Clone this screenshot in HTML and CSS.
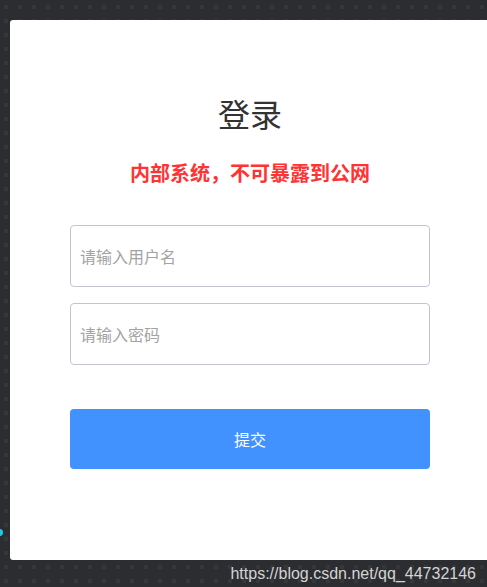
FILE: index.html
```html
<!DOCTYPE html>
<html lang="zh-CN">
<head>
    <meta charset="UTF-8">
    <meta name="viewport" content="width=device-width, initial-scale=1.0">
    <title>登录</title>
    <link rel="stylesheet" href="styles.css">
</head>
<body>
    <span class="edge_dot"></span>
    <div class="login_box">
        <h1 class="title">登录</h1>
        <p class="warning">内部系统，不可暴露到公网</p>
        <form class="login_form" onsubmit="return false">
            <input class="field" type="text" placeholder="请输入用户名">
            <input class="field" type="password" placeholder="请输入密码">
            <button class="submit_btn" type="submit">提交</button>
        </form>
    </div>
    <div class="watermark">https://blog.csdn.net/qq_44732146</div>
</body>
</html>
```

FILE: styles.css
```css
* {
    margin: 0;
    padding: 0;
    box-sizing: border-box;
}
body {
    font-family: "Noto Sans CJK SC", "Noto Sans", sans-serif;
    background-color: #36373b;
    background-image:
        linear-gradient(90deg, transparent 4px, #2c2d31 4px),
        linear-gradient(transparent 4px, #2c2d31 4px);
    background-size: 14px 14px;
    background-position: 4px 5px;
    height: 587px;
    overflow: hidden;
    padding: 20px 0 0 10px;
    position: relative;
}
/* cyan dot peeking in at the left edge */
.edge_dot {
    position: absolute;
    left: -4px;
    top: 529px;
    width: 7px;
    height: 7px;
    border-radius: 50%;
    background-color: #1fc8e6;
}
.login_box {
    width: 480px;
    height: 540px;
    background: #fff;
    border-radius: 3px;
    padding-top: 73px;
    display: flex;
    flex-direction: column;
    align-items: center;
}
.title {
    font-size: 32px;
    font-weight: 400;
    line-height: 40px;
    color: #333;
}
.warning {
    margin-top: 26px;
    font-size: 20px;
    font-weight: 700;
    line-height: 28px;
    color: #ff3333;
}
.login_form {
    margin-top: 38px;
    width: 360px;
    display: flex;
    flex-direction: column;
}
.field {
    height: 62px;
    border: 1px solid #c6c3d0;
    border-radius: 4px;
    padding: 0 9px;
    font-family: inherit;
    font-size: 16px;
    color: #333;
    outline: none;
}
.field + .field {
    margin-top: 16px;
}
.field::placeholder {
    color: #a3a3a3;
}
.submit_btn {
    margin-top: 44px;
    height: 60px;
    border: none;
    border-radius: 4px;
    background-color: #4191ff;
    color: #fff;
    font-family: inherit;
    font-size: 16px;
    cursor: pointer;
}
.watermark {
    text-align: right;
    padding-right: 11px;
    font-family: "Liberation Sans", Arial, sans-serif;
    font-size: 16px;
    line-height: 27px;
    color: #d4d4d4;
}
```
